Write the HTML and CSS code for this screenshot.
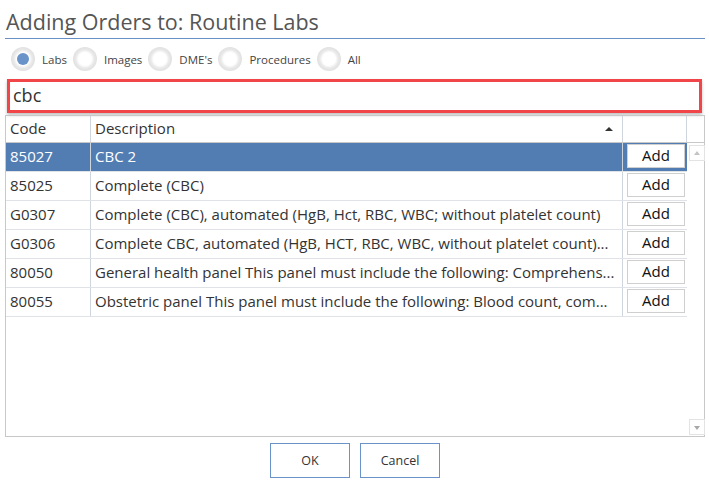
FILE: index.html
```html
<!DOCTYPE html>
<html>
<head>
<meta charset="utf-8">
<link rel="stylesheet" href="styles.css">
</head>
<body>
<div class="dialog">
  <h1 class="title">Adding Orders to: Routine Labs</h1>
  <div class="radios">
    <label class="radio"><span class="dot on"></span><span class="rlabel">Labs</span></label>
    <label class="radio"><span class="dot"></span><span class="rlabel">Images</span></label>
    <label class="radio"><span class="dot"></span><span class="rlabel">DME's</span></label>
    <label class="radio"><span class="dot"></span><span class="rlabel">Procedures</span></label>
    <label class="radio"><span class="dot"></span><span class="rlabel">All</span></label>
  </div>
  <div class="search">cbc</div>
  <div class="grid">
    <div class="head">
      <div class="hc c-code">Code</div>
      <div class="hc c-desc">Description<span class="sort"></span></div>
      <div class="hc c-add"></div>
      <div class="hc c-sb"></div>
    </div>
    <div class="body">
      <div class="rows">
        <div class="row sel"><div class="c c-code">85027</div><div class="c c-desc">CBC 2</div><div class="c c-add"><span class="addbtn">Add</span></div></div>
        <div class="row"><div class="c c-code">85025</div><div class="c c-desc">Complete (CBC)</div><div class="c c-add"><span class="addbtn">Add</span></div></div>
        <div class="row"><div class="c c-code">G0307</div><div class="c c-desc">Complete (CBC), automated (HgB, Hct, RBC, WBC; without platelet count)</div><div class="c c-add"><span class="addbtn">Add</span></div></div>
        <div class="row"><div class="c c-code">G0306</div><div class="c c-desc">Complete CBC, automated (HgB, HCT, RBC, WBC, without platelet count)...</div><div class="c c-add"><span class="addbtn">Add</span></div></div>
        <div class="row"><div class="c c-code">80050</div><div class="c c-desc">General health panel This panel must include the following: Comprehens...</div><div class="c c-add"><span class="addbtn">Add</span></div></div>
        <div class="row"><div class="c c-code">80055</div><div class="c c-desc">Obstetric panel This panel must include the following: Blood count, com...</div><div class="c c-add"><span class="addbtn">Add</span></div></div>
      </div>
      <div class="scrollbar">
        <span class="sbtn up"></span>
        <span class="sbtn down"></span>
      </div>
    </div>
  </div>
  <div class="actions">
    <span class="btn">OK</span>
    <span class="btn">Cancel</span>
  </div>
</div>
</body>
</html>
```
FILE: styles.css
```css
* { box-sizing: border-box; }
html, body { margin: 0; padding: 0; background: #fff; }
body { font-family: "Open Sans", "Noto Sans", sans-serif; color: #333; }
.dialog { width: 709px; padding: 0 4px 0 5px; }
.title {
  margin: 0;
  font-weight: 400;
  font-size: 21.5px;
  line-height: 26px;
  padding: 9px 0 3px 1px;
  color: #555;
  border-bottom: 1px solid #6a8fc4;
  white-space: nowrap;
}
.radios { display: flex; align-items: center; height: 39px; padding-left: 6px; padding-top: 1px; }
.radio { display: flex; align-items: center; margin-right: 6px; }
.dot {
  width: 24px; height: 24px; border-radius: 50%;
  background: radial-gradient(circle, #fff 0, #fff 38%, #e8e8e8 55%, #d4d4d4 100%);
  position: relative;
}
.dot.on::after {
  content: ""; position: absolute; left: 6px; top: 6px; width: 12px; height: 12px;
  border-radius: 50%; background: #6a93c9;
}
.rlabel { font-size: 11.5px; color: #444; margin-left: 7px; }
.search {
  margin: 1px 3px 0 2px;
  height: 34px;
  border: 3px solid #f0464a;
  box-shadow: 0 2px 3px rgba(0,0,0,0.25);
  font-size: 18px;
  line-height: 26px;
  padding-left: 3px;
  color: #333;
}
.grid {
  margin-top: 2px;
  border: 1px solid #c8c8c8;
  height: 322px;
  display: flex; flex-direction: column;
}
.head { display: flex; height: 27px; border-bottom: 1px solid #c8c8c8; }
.hc { font-size: 15px; color: #333; line-height: 25px; padding-left: 4px; position: relative; }
.c-code { width: 85px; flex: none; border-right: 1px solid #cfd5dd; }
.c-desc { width: 532px; flex: none; border-right: 1px solid #cfd5dd; overflow: hidden; white-space: nowrap; }
.c-add { width: 64px; flex: none; }
.head .c-add { border-right: 1px solid #cfd5dd; }
.c-sb { flex: 1; }
.sort {
  position: absolute; right: 9px; top: 11px; width: 0; height: 0;
  border-left: 4px solid transparent; border-right: 4px solid transparent; border-bottom: 4px solid #333;
}
.body { flex: 1; display: flex; }
.rows { width: 681px; flex: none; }
.row { display: flex; height: 29px; border-bottom: 1px solid #dfe3e8; }
.row .c { font-size: 15px; line-height: 27px; padding-left: 4px; color: #333; }
.row.sel { background: #527db3; }
.row.sel .c { color: #fff; }
.row .c-add { padding: 1px 0 0 4px; }
.addbtn {
  display: block; width: 58px; height: 24px; background: #fff;
  border: 1px solid #cfcfcf; text-align: center; font-size: 15px; line-height: 21px; color: #111;
}
.row.sel .addbtn { color: #111; }
.scrollbar { flex: 1; display: flex; flex-direction: column; justify-content: space-between; padding: 2px 1px 1px 2px; }
.sbtn { display: block; width: 16px; height: 16px; border: 1px solid #e3e3e3; position: relative; }
.sbtn::after { content: ""; position: absolute; left: 4px; width: 0; height: 0; border-left: 3.5px solid transparent; border-right: 3.5px solid transparent; }
.sbtn.up::after { top: 5px; border-bottom: 4px solid #c4c4c4; }
.sbtn.down::after { top: 6px; border-top: 4px solid #a8a8a8; }
.actions { display: flex; justify-content: center; gap: 10px; padding-top: 6px; }
.btn {
  width: 80px; height: 35px; border: 1px solid #6a93c9; text-align: center;
  font-size: 12.5px; line-height: 33px; color: #333;
}
```
